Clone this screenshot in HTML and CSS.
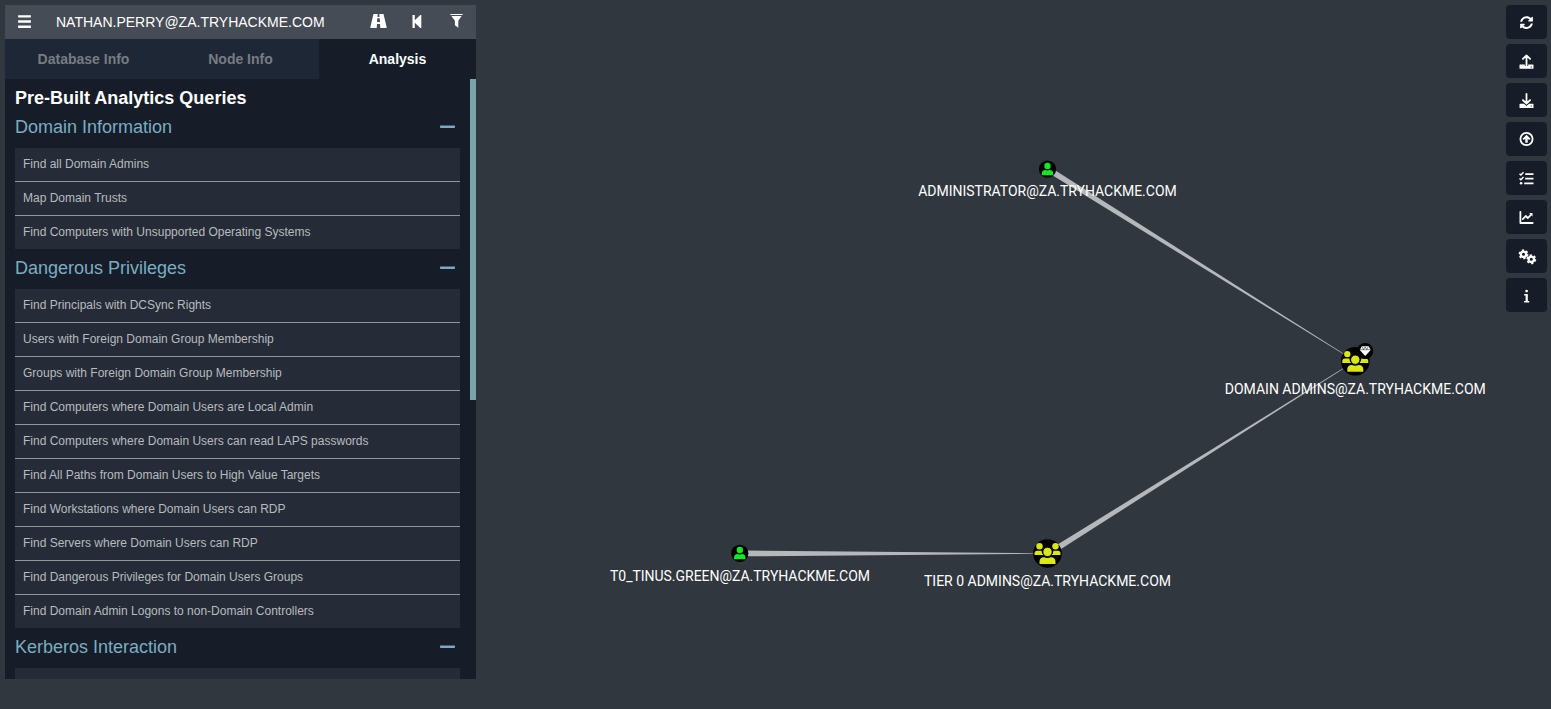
FILE: index.html
```html
<!DOCTYPE html>
<html lang="en">
<head>
<meta charset="utf-8">
<title>Graph</title>
<link rel="stylesheet" href="styles.css">
</head>
<body>
<svg class="graph" viewBox="0 0 1551 709">
  <defs>
    <g id="user"><circle r="8.6" fill="#000"/><circle cy="-3.3" r="3.2"/><path d="M-5.7 6V4.3Q-5.7 .8-2 .8Q0 1.7 2 .8Q5.7 .8 5.7 4.3V6Z"/></g>
    <g id="group"><circle r="14.3" fill="#000"/><circle cx="-8" cy="-7.2" r="3.2"/><circle cx="8" cy="-7.2" r="3.2"/><path d="M-13 1.6V-.2Q-13-2.8-10.4-2.8H-6Q-5.8-.2-4.2 1.6ZM13 1.6V-.2Q13-2.8 10.4-2.8H6Q5.8-.2 4.2 1.6Z"/><circle cy="-1.6" r="4.7" stroke="#000"/><path d="M-8 10.4V8.2Q-8 3.7-3.4 3.7Q0 5.1 3.4 3.7Q8 3.7 8 8.2V10.4Z"/></g>
  </defs>
  <g class="edges">
    <path d="M1055.8 170.8 1347 355.8 1346.8 356.2 1052.8 175.6Z"/>
    <path d="M1057.6 544.5 1346.7 366.1 1347 366.5 1060.6 549.2Z"/>
    <path d="M747 550.6 1036 553.2V553.8L747 556.3Z"/>
  </g>
  <g class="labels">
    <text x="1047.5" y="196" textLength="258.5">ADMINISTRATOR@ZA.TRYHACKME.COM</text>
    <text x="1355.3" y="394" textLength="261">DOMAIN ADMINS@ZA.TRYHACKME.COM</text>
    <text x="1047.5" y="586" textLength="247">TIER 0 ADMINS@ZA.TRYHACKME.COM</text>
    <text x="740" y="581" textLength="260">T0_TINUS.GREEN@ZA.TRYHACKME.COM</text>
  </g>
  <use class="user" href="#user" x="1047.5" y="169.2"/>
  <use class="user" href="#user" x="739.8" y="553.3"/>
  <use class="group" href="#group" x="1047.5" y="553.5"/>
  <use class="group" href="#group" x="1355.3" y="361.3"/>
  <circle cx="1365.2" cy="351" r="8"/>
  <path class="gem" d="M1361.8 346.2H1368.6L1370.7 350 1365.2 356 1359.7 350Z"/>
  <path class="facet" d="M1359.7 349.7H1370.7M1362.2 346.8 1363.6 349.6 1365.2 346.9 1366.8 349.6 1368.2 346.8"/>
</svg>
<main class="layout">
  <aside class="panel">
    <header class="search">
      <svg class="icon menu" viewBox="0 0 16 16"><path d="M2 2H14V4.2H2ZM2 6.9H14V9.1H2ZM2 11.8H14V14H2Z"/></svg>
      <span class="query">NATHAN.PERRY@ZA.TRYHACKME.COM</span>
      <svg class="icon road" viewBox="0 0 18 16"><path transform="translate(.5 0)" d="M4 1H8.2L8 4H10L9.8 1H14L17.2 14.2Q17.2 15 16.5 15H10.8L10.5 11H7.5L7.2 15H1.5Q.8 15 .8 14.2ZM7.8 5.3 7.5 9H10.5L10.2 5.3Z"/></svg>
      <svg class="icon back" viewBox="0 0 16 16"><path transform="translate(.3 0)" d="M3.2 2H5.5V7.2L11 2H12V15H11L5.5 9.8V15H3.2Z"/></svg>
      <svg class="icon filter" viewBox="0 0 16 16"><path transform="translate(.5 0)" d="M1.8 1H14.2V2.1H1.8ZM2.8 3.1H13.2L9.8 7.7V14.8L6.4 12.3V7.7Z"/></svg>
    </header>
    <nav class="tabs"><span>Database Info</span><span>Node Info</span><span class="active">Analysis</span></nav>
    <div class="content">
      <div class="queries">
        <h1>Pre-Built Analytics Queries</h1>
        <h2>Domain Information<i></i></h2>
        <ul><li>Find all Domain Admins</li><li>Map Domain Trusts</li><li>Find Computers with Unsupported Operating Systems</li></ul>
        <h2>Dangerous Privileges<i></i></h2>
        <ul><li>Find Principals with DCSync Rights</li><li>Users with Foreign Domain Group Membership</li><li>Groups with Foreign Domain Group Membership</li><li>Find Computers where Domain Users are Local Admin</li><li>Find Computers where Domain Users can read LAPS passwords</li><li>Find All Paths from Domain Users to High Value Targets</li><li>Find Workstations where Domain Users can RDP</li><li>Find Servers where Domain Users can RDP</li><li>Find Dangerous Privileges for Domain Users Groups</li><li>Find Domain Admin Logons to non-Domain Controllers</li></ul>
        <h2>Kerberos Interaction<i></i></h2>
        <ul><li></li></ul>
      </div>
      <div class="track"><div class="thumb"></div></div>
    </div>
  </aside>
  <div class="tools">
    <button><svg viewBox="0 0 18 18"><path transform="translate(2.9 3) scale(.0258)" d="M370.72 133.28C339.458 104.008 298.888 87.962 255.848 88c-77.458.068-144.328 53.178-162.791 126.85-1.344 5.363-6.122 9.15-11.651 9.15H24.103c-7.498 0-13.194-6.807-11.807-14.176C33.933 94.924 134.813 8 256 8c66.448 0 126.791 26.136 171.315 68.685L463.03 40.97C478.149 25.851 504 36.559 504 57.941V192c0 13.255-10.745 24-24 24H345.941c-21.382 0-32.09-25.851-16.971-40.971l41.75-41.749zM32 296h134.059c21.382 0 32.09 25.851 16.971 40.971l-41.75 41.75c31.262 29.273 71.835 45.319 114.876 45.28 77.418-.07 144.315-53.144 162.787-126.849 1.344-5.363 6.122-9.15 11.651-9.15h57.304c7.498 0 13.194 6.807 11.807 14.176C478.067 417.076 377.187 504 256 504c-66.448 0-126.791-26.136-171.315-68.685L48.97 471.03C33.851 486.149 8 475.441 8 454.059V320c0-13.255 10.745-24 24-24z"/></svg></button>
    <button><svg viewBox="0 0 18 18"><g transform="translate(.5 .8)"><path d="M2.5 11.7H7.3V13.2H10.7V11.7H15.5Q16 11.7 16 12.2V15.5Q16 16 15.5 16H2.5Q2 16 2 15.5V12.2Q2 11.7 2.5 11.7ZM13.2 13.6V14.7H14.3V13.6Z"/><path class="line" d="M9 12.4V3M5.4 6 9 2.6 12.6 6"/></g></svg></button>
    <button><svg viewBox="0 0 18 18"><g transform="translate(.5 .9)"><path d="M2.5 11.8H6.5L9 14 11.5 11.8H15.5Q16 11.8 16 12.3V15.5Q16 16 15.5 16H2.5Q2 16 2 15.5V12.3Q2 11.8 2.5 11.8ZM13.2 13.6V14.7H14.3V13.6Z"/><path class="line" d="M9 2V11M5.4 8.2 9 11.6 12.6 8.2"/></g></svg></button>
    <button><svg viewBox="0 0 18 18"><g transform="translate(.5 0)"><circle class="line" cx="9" cy="9" r="6.1"/><path d="M9 4.7 13 8.7 11.7 10 10.2 8.8V12.8H7.8V8.8L6.3 10 5 8.7Z"/></g></svg></button>
    <button><svg viewBox="0 0 18 18"><g transform="translate(.5 .6)"><path d="M7.7 3.6H16V5.4H7.7ZM7.7 8.2H16V10H7.7ZM6.7 12.8H16V14.6H6.7Z"/><circle cx="3.6" cy="13.7" r="1.3"/><path class="check" d="M2 4.2 3.4 5.5 6 2.7M2 8.9 3.4 10.2 6 7.4"/></g></svg></button>
    <button><svg viewBox="0 0 18 18"><g transform="translate(.5 .8)"><path class="line" d="M2.9 3V14.2H15.2M5.4 10.2 8.2 7.2 10.4 9.2 13.6 5.8"/><path d="M11.6 4.3H15V7.7Z"/></g></svg></button>
    <button><svg viewBox="0 0 18 18"><g class="cog" transform="translate(.5 .3)"><circle cx="6" cy="7" r="2.7"/><circle class="teeth" cx="6" cy="7" r="4"/><circle cx="13.8" cy="12" r="2.7"/><circle class="teeth" cx="13.8" cy="12" r="4"/></g></svg></button>
    <button><svg viewBox="0 0 18 18"><g transform="translate(.6 .9)"><circle cx="9" cy="4.2" r="1.4"/><path d="M6.6 7H10.2V14H11.6V15.6H6.5V14H8V8.6H6.6Z"/></g></svg></button>
  </div>
</main>
</body>
</html>
```
FILE: styles.css
```css
* { box-sizing: border-box; }
body { margin: 0; height: 709px; overflow: hidden; background: #30373e; font-family: "Liberation Sans", Arial, sans-serif; }
.graph { position: absolute; inset: 0; width: 1551px; height: 709px; }
.edges { fill: #b5b8bb; }
.labels { fill: #fff; font: 14px Roboto, sans-serif; text-anchor: middle; }
.user { fill: #17e625; }
.group { fill: #dce60f; }
.gem { fill: #fff; }
.facet { fill: none; stroke: #000; stroke-width: .45; }
.layout { position: relative; display: flex; justify-content: space-between; padding: 5px 4px 0 5px; }
.panel { width: 471px; height: 674px; display: flex; flex-direction: column; background: #161d28; }
.search { display: flex; align-items: center; height: 34px; background: #464c55; color: #fff; padding: 0 12px 0 11px; }
.icon { width: 16px; height: 16px; margin-bottom: 2px; fill: #fff; flex: none; overflow: visible; }
.menu { width: 17px; height: 17px; }
.query { flex: 1; padding-left: 23px; font-size: 14px; line-height: 34px; }
.road { width: 18px; margin-right: 22px; }
.back { margin-right: 23px; }
.tabs { display: grid; grid-template-columns: repeat(3, 1fr); height: 40px; background: #1e2736; color: #777c84; font-size: 14px; font-weight: bold; line-height: 40px; text-align: center; }
.tabs .active { background: #161d28; color: #fff; }
.content { display: flex; flex: 1; overflow: hidden; }
.queries { flex: 1; padding: 0 10px; }
h1 { margin: 0; height: 29px; line-height: 38px; font-size: 18px; color: #fff; }
h2 { display: flex; align-items: center; justify-content: space-between; margin: 0; height: 40px; padding: 0 5px 2px 0; font-size: 18px; font-weight: normal; color: #7badc2; }
h2 i { width: 15px; height: 3px; margin-bottom: 1px; border-top: 1px solid #46606f; border-radius: 1px; background: #7badc2; }
ul { margin: 0; padding: 0; list-style: none; background: #252c37; }
li { height: 34px; padding-left: 8px; font-size: 12px; line-height: 32px; color: #b8bbbf; border-bottom: 1px solid #93979c; }
li:last-child { height: 33px; border: 0; }
.track { width: 6px; }
.thumb { height: 321px; background: #77a5ab; }
.tools { display: flex; flex-direction: column; gap: 5px; width: 41px; }
.tools button { display: flex; align-items: center; justify-content: center; height: 34px; padding: 0 1px 0 0; border: 0; border-radius: 4px; background: #161d28; }
.tools svg { width: 18px; height: 18px; fill: #fff; overflow: visible; }
.tools .line { fill: none; stroke: #fff; stroke-width: 1.8; stroke-linecap: round; stroke-linejoin: round; }
.tools .check { fill: none; stroke: #fff; stroke-width: 1.4; }
.cog circle { fill: none; stroke: #fff; stroke-width: 2.3; }
.cog .teeth { stroke-width: 1.9; stroke-dasharray: 2.1 2.0888; }
```
